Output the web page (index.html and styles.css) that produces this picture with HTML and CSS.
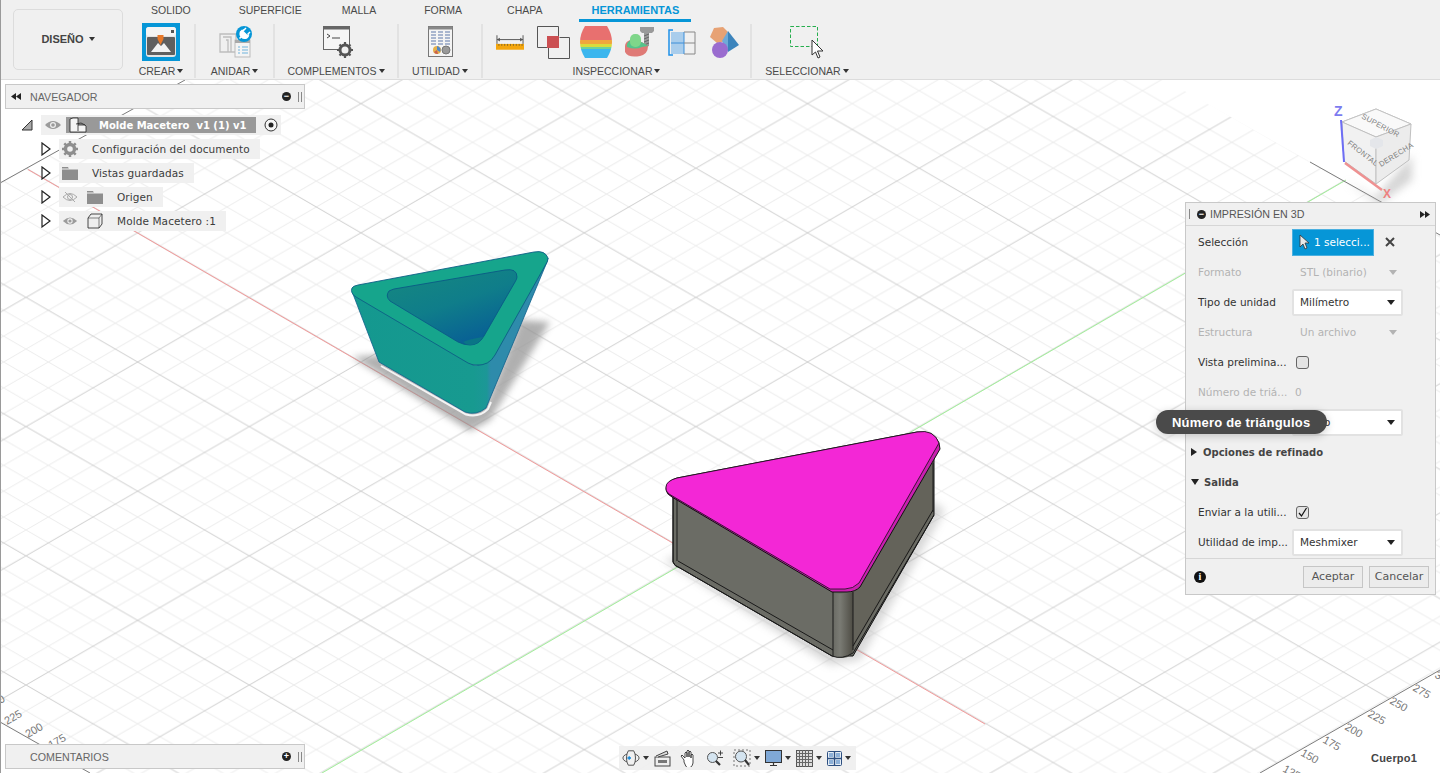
FILE: index.html
```html
<!DOCTYPE html>
<html lang="es">
<head>
<meta charset="utf-8">
<title>Impresión en 3D</title>
<link rel="stylesheet" href="styles.css">
</head>
<body>
<div class="app">
  <header class="toolbar">
    <div class="design-wrap"><button class="design">DISEÑO <span class="caret"></span></button></div>
    <div class="toolbar-main">
      <nav class="tabs">
        <span class="tab t1">SOLIDO</span><span class="tab t2">SUPERFICIE</span><span class="tab t3">MALLA</span><span class="tab t4">FORMA</span><span class="tab t5">CHAPA</span><span class="tab active">HERRAMIENTAS</span>
      </nav>
      <div class="ribbon">
        <div class="group g-crear">
          <div class="icons">
            <svg class="ic" width="38" height="38" viewBox="0 0 38 38"><rect width="38" height="38" fill="#0696d7"/><rect x="4" y="4" width="30" height="30" rx="3" fill="#e4e4e4"/><rect x="4" y="4" width="30" height="9" rx="3" fill="#f4f4f4"/><rect x="29" y="7" width="3" height="3" fill="#555"/><rect x="5" y="14" width="28" height="18" rx="1" fill="#5f5f5f"/><path d="M9 29l7-9 3 3 3-3 7 9z" fill="#f2f2f2"/><path d="M15.500 12h6v4l-3 6-3-6z" fill="#e8792a"/></svg>
          </div>
          <div class="label">CREAR<span class="caret"></span></div>
        </div>
        <div class="group g-anidar">
          <div class="icons">
            <svg class="ic" width="34" height="34" viewBox="0 0 34 34"><path d="M1 9h16v18H1zM4 12h8v15M7 15h2v12" fill="none" stroke="#bdbdbd" stroke-width="1.300"/><rect x="16" y="15" width="15" height="17" fill="#f4f4f4" stroke="#bbb"/><rect x="16" y="15" width="15" height="3" fill="#aaa"/><path d="M19 22h2M23 22h6M19 25h2M23 25h6M19 28h2M23 28h6" stroke="#6fb3dc"/><circle cx="25" cy="9" r="8" fill="#0696d7"/><path d="M20.500 13.500l2-2M23 5.500l6 6-1.500 1.500q-3 1-5-1t-1-5zM25 4.500l-2 2M30 9.500l-2 2M27 3l-2.500 2.500M31 7l-2.500 2.500" stroke="#fff" stroke-width="1.500" fill="#fff"/></svg>
          </div>
          <div class="label">ANIDAR<span class="caret"></span></div>
        </div>
        <div class="group g-comp">
          <div class="icons">
            <svg class="ic" width="32" height="34" viewBox="0 0 32 34"><rect x=".5" y="1.500" width="26" height="23" fill="#f6f6f6" stroke="#666"/><rect x=".5" y="1.500" width="26" height="3" fill="#666"/><path d="M4 9l3 2-3 2M9 13h8" fill="none" stroke="#444"/><circle cx="22" cy="25" r="5" fill="#f0f0f0" stroke="#555" stroke-width="3"/><path d="M22 17v3M22 30v3M14 25h3M27 25h3M16.500 19.500l2 2M25.500 28.500l2 2M16.500 30.500l2-2M25.500 21.500l2-2" stroke="#555" stroke-width="2.200"/></svg>
          </div>
          <div class="label">COMPLEMENTOS<span class="caret"></span></div>
        </div>
        <div class="group g-util">
          <div class="icons">
            <svg class="ic" width="26" height="32" viewBox="0 0 26 32"><rect x=".5" y=".5" width="24" height="30" fill="#f4f4f4" stroke="#777"/><rect x=".5" y=".5" width="24" height="3" fill="#888"/><path d="M3 6h5M10 6h5M17 6h5M3 9h5M10 9h5M17 9h5M3 12h5M10 12h5M17 12h5M3 15h5M10 15h5M17 15h5M3 18h5M10 18h5M17 18h5" stroke="#a9b6cf" stroke-width="2"/><circle cx="9" cy="24" r="4" fill="#e5b04a"/><path d="M9 24v-4a4 4 0 0 1 3 6z" fill="#4f86c6"/><path d="M9 24l-3 2a4 4 0 0 0 4 2z" fill="#c9604f"/><circle cx="18" cy="24" r="4" fill="#999" stroke="#777"/></svg>
          </div>
          <div class="label">UTILIDAD<span class="caret"></span></div>
        </div>
        <div class="group g-insp">
          <div class="icons">
            <svg class="ic i-ruler" width="28" height="16" viewBox="0 0 29 16"><path d="M1 1v9M28 1v9M1 5.500h27" stroke="#555" fill="none"/><path d="M1 5.500l3-2v4zM28 5.500l-3-2v4z" fill="#555"/><rect y="10" width="29" height="6" fill="#f4a60d"/><path d="M3 10v2M6 10v2M9 10v2M12 10v2M15 10v2M18 10v2M21 10v2M24 10v2M27 10v2" stroke="#8a6a20"/></svg>
            <svg class="ic i-sect" width="33" height="33" viewBox="0 0 33 33"><path d="M.5 21.500V.500h21v10" fill="none" stroke="#555"/><path d="M11.500 21.500v11h21v-21h-10" fill="none" stroke="#555"/><path d="M.5 21.500h11" stroke="#555"/><rect x="10" y="10" width="12" height="12" fill="#cb4f52"/></svg>
            <svg class="ic i-zebra" width="32" height="32" viewBox="0 0 32 32"><defs><clipPath id="barrel"><path d="M5 0h22q5 8 5 16t-5 16H5q-5-8-5-16T5 0z"/></clipPath></defs><g clip-path="url(#barrel)"><rect width="32" height="14" fill="#e8706f"/><rect y="14" width="32" height="4" fill="#f0a63c"/><rect y="18" width="32" height="3" fill="#d8dc3c"/><rect y="21" width="32" height="2" fill="#6fd29a"/><rect y="23" width="32" height="9" fill="#3bb6ee"/></g></svg>
            <svg class="ic i-curv" width="30" height="32" viewBox="0 0 30 32"><path d="M16 1h14v4l-2 2h-3v13l-5 2V7h-2l-2-2z" fill="#9a9a9a"/><path d="M20 10l5-2M20 13l5-2M20 16l5-2M20 19l5-2" stroke="#666"/><path d="M1 20q0-4 5-6h4q10 2 14 6q0 8-8 10Q4 32 1 26z" fill="#df7a76"/><path d="M5 15q-3 3-2 6q8 3 15 0l6-1q-4-4-14-6z" fill="#55c38b"/><rect x="6" y="8" width="11" height="13" rx="5" fill="#7fd68a"/></svg>
            <svg class="ic i-comp" width="28" height="27" viewBox="0 0 28 27"><rect x="3" y="3" width="13" height="22" fill="#a9cdec"/><path d="M3 14h13M16 3v22" stroke="#3d8ed8"/><path d="M16 3h11v22H16M16 14h11" fill="none" stroke="#888"/><path d="M5 1H1v25h4" fill="none" stroke="#1e90e8" stroke-width="1.500"/></svg>
            <svg class="ic i-shapes" width="31" height="32" viewBox="0 0 31 32"><path d="M5 2l9-1 6 6-3 8-9 2-7-6z" fill="#e7a274"/><path d="M19 5l11 14-11 7z" fill="#3c84bc"/><path d="M19 5l-6 10 6 11z" fill="#6faad8"/><circle cx="11" cy="24" r="8" fill="#9a6ccf"/></svg>
          </div>
          <div class="label">INSPECCIONAR<span class="caret"></span></div>
        </div>
        <div class="group g-sel">
          <div class="icons">
            <svg class="ic" width="34" height="34" viewBox="0 0 34 34"><rect x=".5" y="1.500" width="27" height="20" fill="none" stroke="#27ae4e" stroke-dasharray="3.500 2"/><path d="M22 15v15l3.500-3 2.500 6 2-1-2.500-6H33z" fill="#fff" stroke="#333"/></svg>
          </div>
          <div class="label">SELECCIONAR<span class="caret"></span></div>
        </div>
      </div>
    </div>
  </header>

  <main class="viewport">
    <svg class="scene" viewBox="0 80 1440 693" width="1440" height="693">
      <defs>
        <pattern id="grid" patternUnits="userSpaceOnUse" x="26" y="685" width="223.300" height="129.200">
          <g transform="scale(.99688 .99385)">
            <path class="minor" d="M-179.200 0l224 130M-134.400 0l224 130M-89.600 0l224 130M-44.800 0l224 130M44.800 0l224 130M89.600 0l224 130M134.400 0l224 130M179.200 0l224 130M-179.200 130l224-130M-134.400 130l224-130M-89.600 130l224-130M-44.800 130l224-130M44.800 130l224-130M89.600 130l224-130M134.400 130l224-130M179.200 130l224-130"/>
            <path class="major" d="M0 0l224 130M0 130l224-130"/>
          </g>
        </pattern>
        <clipPath id="plate"><path d="M0 183L185 80H1165L1440 235V670L1260 773H90L0 722z"/></clipPath>
        <filter id="soft" x="-30%" y="-30%" width="160%" height="160%"><feGaussianBlur stdDeviation="3.500"/></filter>
        <filter id="softer" x="-30%" y="-30%" width="160%" height="160%"><feGaussianBlur stdDeviation="4"/></filter>
        <linearGradient id="hole" x1="0" y1="0" x2=".6" y2="1"><stop offset="0" stop-color="#16897f"/><stop offset=".55" stop-color="#0f7d8a"/><stop offset="1" stop-color="#085f95"/></linearGradient>
        <linearGradient id="tealSide" gradientUnits="userSpaceOnUse" x1="353" y1="0" x2="547" y2="0"><stop offset="0" stop-color="#14988f"/><stop offset=".62" stop-color="#179a90"/><stop offset=".69" stop-color="#1c9797"/><stop offset=".71" stop-color="#2e8bab"/><stop offset="1" stop-color="#2e8bab"/></linearGradient>
        <linearGradient id="cyl" x1="0" y1="0" x2="1" y2="0"><stop offset="0" stop-color="#6a6b64"/><stop offset=".35" stop-color="#7a7b74"/><stop offset="1" stop-color="#4e4c44"/></linearGradient>
      </defs>
      <rect class="grid-fill" x="0" y="80" width="1440" height="693" clip-path="url(#plate)"/>
      <path class="axis-red" d="M28 169.500L985 724"/>
      <path class="axis-green" d="M1346 180L322 773"/>
      <path class="edge" d="M0 183L185 80M1310 162L1440 235M0 722L90 773M1260 773L1440 670"/>
      <g class="ticks">
        <text transform="translate(-10 710) rotate(-30)">250</text>
        <text transform="translate(7 725) rotate(-30)">225</text>
        <text transform="translate(28 738) rotate(-30)">200</text>
        <text transform="translate(51 749) rotate(-30)">175</text>
        <text transform="translate(1282 771) rotate(30)">125</text>
        <text transform="translate(1300 755) rotate(30)">150</text>
        <text transform="translate(1322 742) rotate(30)">175</text>
        <text transform="translate(1344 729) rotate(30)">200</text>
        <text transform="translate(1367 716) rotate(30)">225</text>
        <text transform="translate(1389 703) rotate(30)">250</text>
        <text transform="translate(1412 690) rotate(30)">275</text>
        <text transform="translate(1434 677) rotate(30)">300</text>
      </g>

      <!-- molde -->
      <path class="shadow" d="M352 357L380 355L470 412L487 402L520 320L550 322L490 420L470 431z" filter="url(#soft)"/>
      <path class="halo" d="M381 366L466 414.500Q479 418 488 409L491 402"/>
      <path d="M353 294L379 362L465 412Q476 416 486 408L547 262L548 258L490 360Q484 366 473 365z" fill="url(#tealSide)" stroke="#0e5f8c" stroke-width=".8"/>
      <path d="M352 288Q353 286 358 285L534 252Q545 250 548 258Q548 261 546 264L495 355Q489 366 476 365Q472 365 468 363L356 297Q350 293 352 288z" fill="#16a58c" stroke="#0d5f86" stroke-width=".9"/>
      <path d="M389 291Q391 290 394 289L505 270Q517 268 517 277Q517 279 515 282L484 336Q479 345 470 345Q464 345 458 342L390 301Q385 296 389 291z" fill="url(#hole)" stroke="#0a5a86" stroke-width=".9"/>
      <path d="M463 342Q470 339 483 337Q478 345 470 345Q466 345 463 342z" fill="#0a7586"/>

      <!-- tapa -->
      <path class="shadow light" d="M664 560L830 665L860 660L945 510L930 500L850 640L680 555z" filter="url(#softer)"/>
      <path d="M673 497V562Q674 566 680 568L832 656H853L934 515V455L850 590H830z" fill="#6b6c65" stroke="#111" stroke-width="1"/>
      <path d="M853 592L933 463V512L853 648z" fill="#64635a"/>
      <path d="M833 593Q842 595 853 592V650Q852 657 843 658Q834 658 833 654z" fill="url(#cyl)"/>
      <path class="seam" d="M677 500V561M678 561L833 650M833 590V655M853 592V650M853 646L933 510M933 463V512M673 497V562Q674 566 680 568L832 656Q842 660 853 653L934 515"/>
      <path d="M666 489Q666 481 677 478L917 432Q934 430 939 443L940 449L860 587Q855 592 847 592H832L672 497Q666 494 666 489z" fill="#c91fb0" stroke="#111" stroke-width="1"/>
      <path d="M666 487Q666 481 677 478L917 432Q934 429 939 443L859 583Q853 589 845 589H830L669 494Q665 491 666 487z" fill="#f327d6" stroke="#111" stroke-width=".8"/>

      <!-- viewcube -->
      <g class="cube">
        <path class="cube-shadow" d="M1345 180L1375 198L1412 155V180L1378 205z" filter="url(#softer)"/>
        <path d="M1342 122L1376 109L1411 124L1376 183L1344 161z" fill="#f4f4f4" stroke="#bbb"/>
        <path d="M1342 122L1376 109L1411 124L1376 137z" fill="#f9f9f9" stroke="#c4c4c4"/>
        <path d="M1342 122L1376 137V184L1344 161z" fill="#f1f1f1" stroke="#c0c0c0"/>
        <path d="M1376 137L1411 124L1409 160L1376 184z" fill="#ececec" stroke="#c0c0c0"/>
        <path d="M1376 137l7 3v6l-7 3-6-3v-6z" fill="#e4e6ea"/>
        <text class="cube-t" transform="translate(1361 118) rotate(28)">SUPERIOR</text>
        <text class="cube-t" transform="translate(1347 144) rotate(38)">FRONTAL</text>
        <text class="cube-t" transform="translate(1381 167) rotate(-32)">DERECHA</text>
        <path class="cube-z" d="M1341 120L1344 162"/>
        <path class="cube-x" d="M1345 163L1382 190"/>
        <text class="axis-z" x="1334" y="116">Z</text>
        <text class="axis-x" x="1383" y="198">X</text>
      </g>
    </svg>

    <section class="panel browser">
      <header class="panel-head">
        <svg class="dbl" width="10" height="7" viewBox="0 0 10 7"><path d="M0 3.500L5 0v7zM5 3.500L10 0v7z"/></svg><span class="panel-title">NAVEGADOR</span>
        <span class="round">−</span><span class="grip"></span>
      </header>
    </section>

    <ul class="tree">
      <li class="node root">
        <svg class="twist-root" width="12" height="12" viewBox="0 0 12 12"><path d="M11 1v10H1z" fill="#aaa" stroke="#333"/></svg>
        <div class="chip chip-root">
          <svg class="eye" width="18" height="10" viewBox="0 0 18 10"><path d="M1 5q8-8 16 0q-8 8-16 0z" fill="#9b9b9b"/><circle cx="9" cy="5" r="3" fill="#f0f0f0"/><circle cx="9" cy="5" r="1.800" fill="#9b9b9b"/></svg>
          <div class="root-bar">
            <svg class="bar-ic" width="18" height="16" viewBox="0 0 18 16"><path d="M1 15V2l3-1h5v13M9 8h7l1 1v6H1" fill="#f4f4f4" stroke="#222" stroke-width=".8"/><path d="M7 7l5 -1 4 2" fill="none" stroke="#222" stroke-width=".8"/></svg>
            <span>Molde Macetero&nbsp; v1 (1) v1</span>
          </div>
          <svg class="radio" width="14" height="14" viewBox="0 0 14 14"><circle cx="7" cy="7" r="6" fill="#f6f6f6" stroke="#333"/><circle cx="7" cy="7" r="2.500" fill="#222"/></svg>
        </div>
      </li>
      <li class="node">
        <svg class="twist" width="10" height="14" viewBox="0 0 10 14"><path d="M1 1l8 6-8 6z" fill="#fff" stroke="#222" stroke-width="1.200"/></svg>
        <div class="chip">
          <svg class="slot" width="16" height="16" viewBox="0 0 16 16"><circle cx="8" cy="8" r="4.500" fill="none" stroke="#8e8e8e" stroke-width="3.400"/><path d="M8 0v3M8 13v3M0 8h3M13 8h3M2.300 2.300l2 2M11.700 11.700l2 2M2.300 13.700l2-2M11.700 4.300l2-2" stroke="#8e8e8e" stroke-width="2.500"/></svg>
          <span class="name">Configuración del documento</span>
        </div>
      </li>
      <li class="node">
        <svg class="twist" width="10" height="14" viewBox="0 0 10 14"><path d="M1 1l8 6-8 6z" fill="#fff" stroke="#222" stroke-width="1.200"/></svg>
        <div class="chip">
          <svg class="slot" width="16" height="14" viewBox="0 0 16 14"><path d="M0 1h6l1 2h9v11H0z" fill="#8e8e8e"/><path d="M0 3h16" stroke="#f0f0f0"/></svg>
          <span class="name">Vistas guardadas</span>
        </div>
      </li>
      <li class="node">
        <svg class="twist" width="10" height="14" viewBox="0 0 10 14"><path d="M1 1l8 6-8 6z" fill="#fff" stroke="#222" stroke-width="1.200"/></svg>
        <div class="chip">
          <svg class="slot" width="16" height="12" viewBox="0 0 16 12"><path d="M1 6q7-7 14 0q-7 7-14 0z" fill="none" stroke="#aaa"/><circle cx="8" cy="6" r="2.500" fill="none" stroke="#aaa"/><path d="M3 1l10 10" stroke="#aaa"/></svg>
          <svg class="slot" width="16" height="14" viewBox="0 0 16 14"><path d="M0 1h6l1 2h9v11H0z" fill="#8e8e8e"/><path d="M0 3h16" stroke="#f0f0f0"/></svg>
          <span class="name">Origen</span>
        </div>
      </li>
      <li class="node">
        <svg class="twist" width="10" height="14" viewBox="0 0 10 14"><path d="M1 1l8 6-8 6z" fill="#fff" stroke="#222" stroke-width="1.200"/></svg>
        <div class="chip">
          <svg class="slot" width="16" height="10" viewBox="0 0 18 10"><path d="M1 5q8-8 16 0q-8 8-16 0z" fill="#9b9b9b"/><circle cx="9" cy="5" r="3" fill="#f0f0f0"/><circle cx="9" cy="5" r="1.800" fill="#9b9b9b"/></svg>
          <svg class="slot" width="16" height="16" viewBox="0 0 16 16"><path d="M1 5l3-4h11v10l-3 4H1z" fill="#eee" stroke="#333" stroke-width=".9"/><path d="M1 5h11v10M12 5l3-4" fill="none" stroke="#333" stroke-width=".6"/></svg>
          <span class="name">Molde Macetero :1</span>
        </div>
      </li>
    </ul>

    <section class="panel comments">
      <header class="panel-head">
        <span class="dbl-space"></span><span class="panel-title">COMENTARIOS</span>
        <span class="round">+</span><span class="grip"></span>
      </header>
    </section>

    <section class="dialog">
      <header class="dialog-head">
        <span class="grip"></span><span class="round">−</span><span class="dialog-title">IMPRESIÓN EN 3D</span>
        <svg class="dbl-end" width="10" height="7" viewBox="0 0 10 7"><path d="M0 0L5 3.500 0 7zM5 0L10 3.500 5 7z"/></svg>
      </header>
      <div class="dialog-body">
        <div class="row"><label>Selección</label>
          <div class="selbtn">
            <svg width="11" height="16" viewBox="0 0 11 16"><path d="M1 1v12l3-3 2 5 2-1-2-5h4z" fill="#e8e8e8" stroke="#333" stroke-width=".8"/></svg>
            <span>1 selecci...</span>
          </div>
          <svg class="clear" width="10" height="10" viewBox="0 0 10 10"><path d="M1 1l8 8M9 1l-8 8" stroke="#444" stroke-width="2"/></svg>
        </div>
        <div class="row off"><label>Formato</label><div class="static">STL (binario)<span class="down"></span></div></div>
        <div class="row"><label>Tipo de unidad</label><div class="select">Milímetro<span class="down"></span></div></div>
        <div class="row off"><label>Estructura</label><div class="static">Un archivo<span class="down"></span></div></div>
        <div class="row"><label>Vista prelimina...</label><span class="check"></span></div>
        <div class="row off"><label>Número de triá...</label><span class="zero">0</span></div>
        <div class="row"><span class="label-gap"></span><div class="select select-under"><span class="tail">o</span><span class="down"></span></div></div>
        <div class="row section"><span class="tri-r"></span>Opciones de refinado</div>
        <div class="row section"><span class="tri-d"></span>Salida</div>
        <div class="row"><label>Enviar a la utili...</label><span class="check"><svg width="11" height="11" viewBox="0 0 11 11"><path d="M2 6l2.500 3L9.500 1" fill="none" stroke="#111" stroke-width="1.200"/></svg></span></div>
        <div class="row"><label>Utilidad de imp...</label><div class="select">Meshmixer<span class="down"></span></div></div>
      </div>
      <footer class="dialog-foot">
        <span class="info">i</span>
        <button class="btn">Aceptar</button><button class="btn">Cancelar</button>
      </footer>
    </section>

    <div class="tooltip">Número de triángulos</div>

    <div class="navbar">
      <svg width="18" height="18" viewBox="0 0 20 18"><ellipse cx="10" cy="9" rx="9" ry="5" fill="none" stroke="#444"/><path d="M7 1h6q2 3 2 8t-2 8H7q-2-3-2-8t2-8z" fill="#f0f0f0" stroke="#444"/><path d="M6 9h4M8 7v4" stroke="#1487d8" stroke-width="1.500"/></svg><span class="mini"></span>
      <svg width="17" height="17" viewBox="0 0 17 17"><rect x="1" y="7" width="15" height="9" fill="#eee" stroke="#444"/><path d="M4 10h9v3H4z" fill="#777"/><path d="M2 6l11-5 1 3-10 3" fill="#ddd" stroke="#444"/></svg>
      <svg width="17" height="17" viewBox="0 0 17 17"><path d="M4 10L1 6l1-1 3 3V3l1-1 1 1v4V1l1-1 1 1v6-5l1-1 1 1v6-3l1-1 1 1v8q-1 5-5 5H8q-2 0-4-6z" fill="#fff" stroke="#333" stroke-width=".9"/></svg>
      <svg width="18" height="17" viewBox="0 0 18 17"><circle cx="6.500" cy="7.500" r="5" fill="#d4e4f0" stroke="#555"/><path d="M10 11l4 4" stroke="#333" stroke-width="2.200"/><path d="M12 3h5M14.500 .5v5M12 7.500h5" stroke="#333" stroke-width=".9"/></svg>
      <svg width="18" height="18" viewBox="0 0 18 18"><path d="M1 1h16v16H1z" fill="none" stroke="#777" stroke-dasharray="2 2"/><circle cx="8" cy="7.500" r="5.500" fill="#d4e4f0" stroke="#555"/><path d="M12 11l4 5" stroke="#333" stroke-width="2.200"/></svg><span class="mini"></span>
      <svg width="17" height="17" viewBox="0 0 17 17"><rect x=".5" y=".5" width="16" height="12" fill="#7fa8d6" stroke="#333"/><path d="M5 15.500h7M8.500 13v2" stroke="#333" stroke-width="1.200"/></svg><span class="mini"></span>
      <svg width="17" height="17" viewBox="0 0 17 17"><rect x=".5" y=".5" width="16" height="16" fill="#ddd" stroke="#555"/><path d="M3.500 0v17M6.500 0v17M9.500 0v17M12.500 0v17M0 3.500h17M0 6.500h17M0 9.500h17M0 12.500h17" stroke="#666"/></svg><span class="mini"></span>
      <svg width="15" height="15" viewBox="0 0 15 15"><rect x=".5" y=".5" width="14" height="14" rx="1" fill="#e6eef6" stroke="#2d4f80"/><path d="M7.500 0v15M0 7.500h15" stroke="#2d4f80" stroke-width="1.400"/><path d="M2 2h4v4H2zM9 2h4v4H9zM2 9h4v4H2zM9 9h4v4H9z" fill="#8eb1d8"/></svg><span class="mini"></span>
    </div>

    <div class="bodyname">Cuerpo1</div>
  </main>
</div>
</body>
</html>
```
FILE: styles.css
```css
* { box-sizing: border-box; }
html, body { margin: 0; height: 773px; overflow: hidden; background: #fff; }
body { font-family: "DejaVu Sans", sans-serif; font-size: 10.5px; color: #3c3c3c; }
.app { display: flex; flex-direction: column; height: 773px; width: 1440px; border-left: 1px solid #9a9a9a; }
svg { display: block; flex: none; }

/* toolbar */
.toolbar { display: flex; height: 80px; background: #f0f0f0; border-bottom: 1px solid #dcdcdc; flex: none; font-family: "Liberation Sans", sans-serif; font-size: 10.5px; color: #4a4a4a; }
.design-wrap { padding: 9px 0 0 12px; width: 138px; flex: none; }
.design { width: 110px; height: 61px; border: 1px solid #dcdcdc; border-radius: 5px; background: #f0f0f0; font: bold 11px "Liberation Sans", sans-serif; color: #444; padding: 0 0 2px; }
.caret { display: inline-block; width: 0; height: 0; margin-left: 2px; vertical-align: 2px; border: 3px solid transparent; border-top: 4px solid #333; border-bottom: 0; }
.toolbar-main { flex: 1; display: flex; flex-direction: column; min-width: 0; }
.tabs { display: flex; height: 22px; }
.tab { padding-top: 4px; line-height: 13px; height: 22px; white-space: nowrap; }
.t1 { margin-left: 12px; }
.t2 { margin-left: 48px; }
.t3 { margin-left: 40px; }
.t4 { margin-left: 48px; }
.t5 { margin-left: 45px; }
.tab.active { margin-left: 37px; padding: 4px 12px 0; color: #0696d7; font-weight: bold; font-size: 11px; border-bottom: 3px solid #0696d7; }
.ribbon { display: flex; height: 57px; }
.group { display: flex; flex-direction: column; align-items: center; height: 54px; border-right: 2px solid #e2e2e2; flex: none; margin-top: 2px; }
.group:last-child { border-right: 0; }
.icons { display: flex; align-items: center; height: 38px; margin-top: -1px; }
.label { margin-top: 4px; line-height: 13px; white-space: nowrap; }
.g-crear { width: 57px; padding-right: 11px; }
.g-anidar { width: 79px; }
.g-comp { width: 124px; }
.g-util { width: 84px; }
.g-insp { width: 269px; }
.g-sel { width: 110px; }
.g-anidar .ic { margin-left: 3px; }
.g-comp .ic { margin-left: 5px; }
.g-util .ic { margin-left: 2px; }
.i-sect { margin-left: 13px; }
.i-zebra { margin-left: 10px; }
.i-curv { margin-left: 12px; }
.i-comp { margin-left: 14px; }
.i-shapes { margin-left: 13px; }
.g-insp .icons { margin-left: 3px; }

/* viewport */
.viewport { position: relative; flex: 1; overflow: hidden; }
.scene { position: absolute; left: -1px; top: 0; }
.grid-fill { fill: url(#grid); }
.minor { stroke: #ececec; stroke-width: 1; fill: none; }
.major { stroke: #d0d0d0; stroke-width: 1; fill: none; }
.axis-red { stroke: #f29a9a; stroke-width: 1; fill: none; }
.axis-green { stroke: #a2f09a; stroke-width: 1; fill: none; }
.edge { stroke: #7c7c7c; stroke-width: 1; fill: none; }
.ticks text { font: 11px "Liberation Sans", sans-serif; fill: #777; }
.shadow { fill: #8e8e8e; opacity: .7; }
.shadow.light { opacity: .35; }
.halo { fill: none; stroke: #fff; stroke-width: 2; opacity: .85; }
.seam { fill: none; stroke: #1a1a1a; stroke-width: 1; }
.cube-shadow { fill: #aaa; opacity: .5; }
.cube-t { font: 7.500px "Liberation Sans", sans-serif; fill: #808080; letter-spacing: .3px; }
.cube-z { stroke: #6d6df5; stroke-width: 2; fill: none; }
.cube-x { stroke: #ef9191; stroke-width: 2.500; fill: none; }
.axis-z { font: bold 14px "Liberation Sans", sans-serif; fill: #7c7cf0; }
.axis-x { font: bold 12px "Liberation Sans", sans-serif; fill: #ee8080; }

/* panels */
.panel { position: absolute; left: 4px; width: 300px; height: 25px; background: #f0f0f0; border: 1px solid #c8c8c8; }
.browser { top: 4px; }
.comments { bottom: 4px; }
.panel-head { display: flex; align-items: center; height: 23px; padding: 0 0 0 5px; font-family: "Liberation Sans", sans-serif; font-size: 10.700px; color: #666; }
.dbl { fill: #222; margin-right: 9px; }
.dbl-space { width: 19px; flex: none; }
.panel-title { flex: 1; }
.round { width: 9px; height: 9px; border-radius: 50%; background: #222; color: #fff; font: bold 9px/9px "Liberation Sans", sans-serif; text-align: center; flex: none; }
.grip { width: 4px; height: 10px; border-left: 1px solid #888; border-right: 1px solid #888; margin: 0 2px 0 7px; flex: none; }

.tree { position: absolute; left: 20px; top: 33px; margin: 0; padding: 0; list-style: none; }
.node { display: flex; align-items: center; height: 24px; padding-left: 20px; gap: 8px; }
.node.root { padding-left: 0; gap: 8px; }
.twist { flex: none; }
.chip { display: flex; align-items: center; height: 20px; background: #f0f0f0; gap: 9px; padding: 0 10px 0 3px; }
.chip-root { width: 240px; gap: 4px; padding: 0 0 0 3px; }
.slot { flex: none; }
.name { padding-left: 5px; letter-spacing: .1px; }
.root-bar { display: flex; align-items: center; width: 190px; height: 16px; background: #999; color: #fff; font-weight: bold; padding-left: 3px; gap: 12px; white-space: nowrap; font-size: 10px; }
.radio { margin-left: 4px; }

/* dialog */
.dialog { position: absolute; left: 1184px; top: 122px; width: 251px; height: 393px; background: #f0f0f0; border: 1px solid #c8c8c8; display: flex; flex-direction: column; }
.dialog-head { display: flex; align-items: center; height: 23px; border-bottom: 1px solid #d6d6d6; font-family: "Liberation Sans", sans-serif; font-size: 10.700px; color: #555; flex: none; }
.dialog-head .grip { margin: 0 7px 0 0; border-left: 0; }
.dialog-title { flex: 1; padding-left: 4px; }
.dbl-end { fill: #222; margin-right: 5px; }
.dialog-body { flex: 1; padding-top: 1px; }
.row { display: flex; align-items: center; height: 30px; padding-left: 12px; color: #333; white-space: nowrap; }
.row label { width: 94px; flex: none; }
.label-gap { width: 94px; flex: none; }
.row.off, .row.off label { color: #b3b3b3; }
.selbtn { display: flex; align-items: center; gap: 4px; width: 82px; height: 27px; background: #0696d7; color: #fff; padding-left: 6px; border: 1px solid #4bb0e0; }
.clear { margin-left: 11px; }
.select { display: flex; align-items: center; justify-content: space-between; width: 111px; height: 27px; background: #fff; border: 2px solid #e2e2e2; padding: 0 6px; color: #333; border-radius: 2px; }
.select-under { padding-left: 30px; }
.static { display: flex; align-items: center; justify-content: space-between; width: 111px; padding: 0 6px 0 8px; }
.down { width: 0; height: 0; border: 4px solid transparent; border-top: 5px solid #222; border-bottom: 0; flex: none; }
.off .down { border-top-color: #b3b3b3; }
.check { display: flex; align-items: center; justify-content: center; width: 13px; height: 13px; margin-left: 4px; border: 1px solid #666; border-radius: 3px; background: #e4e4e4; }
.zero { padding-left: 3px; }
.section { padding-left: 5px; font-weight: bold; font-size: 10px; color: #444; gap: 6px; }
.tri-r { width: 0; height: 0; border: 4px solid transparent; border-left: 6px solid #222; border-right: 0; }
.tri-d { width: 0; height: 0; border: 4px solid transparent; border-top: 6px solid #222; border-bottom: 0; margin-right: -1px; }
.dialog-foot { display: flex; align-items: center; height: 36px; border-top: 1px solid #d6d6d6; padding: 0 6px 0 8px; gap: 6px; flex: none; }
.info { width: 12px; height: 12px; border-radius: 50%; background: #111; color: #fff; font: bold 10px/12px "Liberation Serif", serif; text-align: center; margin-right: auto; }
.btn { width: 60px; height: 22px; background: #ececec; border: 1px solid #c6c6c6; padding: 0; font: 11px "DejaVu Sans", sans-serif; color: #555; }

.tooltip { position: absolute; left: 1155px; top: 330px; width: 171px; height: 24px; border-radius: 12px; background: #4a4a4a; color: #fff; font: bold 13px/25px "Liberation Sans", sans-serif; padding-left: 16px; box-shadow: 0 2px 8px rgba(0,0,0,.2); letter-spacing: .2px; white-space: nowrap; }

.navbar { position: absolute; left: 618px; bottom: 3px; width: 237px; height: 24px; background: rgba(238,238,238,.9); display: flex; align-items: center; padding-left: 3px; gap: 9px; }
.mini { width: 0; height: 0; border: 3.500px solid transparent; border-top: 4px solid #333; border-bottom: 0; margin: 0 -4px 0 -6px; }
.bodyname { position: absolute; left: 1370px; top: 672px; font: bold 11px "Liberation Sans", sans-serif; color: #444; letter-spacing: .2px; }
```
